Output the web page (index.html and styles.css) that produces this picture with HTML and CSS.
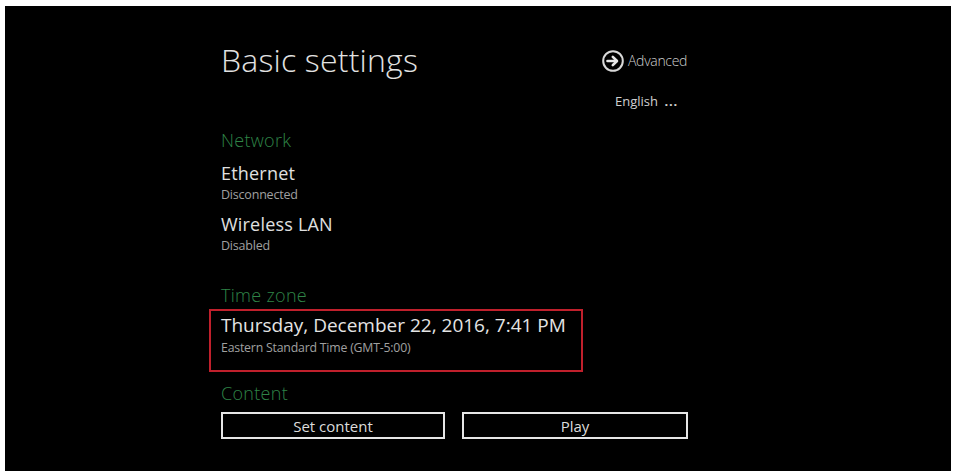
FILE: index.html
```html
<!DOCTYPE html>
<html lang="en">
<head>
<meta charset="utf-8">
<title>Basic settings</title>
<link rel="stylesheet" href="styles.css">
</head>
<body>
<div class="screen">
  <div class="main">
    <header class="header">
      <h1 class="title">Basic settings</h1>
      <div class="side">
        <div class="advanced">
          <svg class="adv-icon" width="22" height="22" viewBox="0 0 22 22">
            <circle cx="11" cy="11" r="9.8" fill="none" stroke="#d8d8d8" stroke-width="2"/>
            <path d="M5.5 11 H14.5" stroke="#e8e8e8" stroke-width="2.6" stroke-linecap="round"/>
            <path d="M10.8 6.8 L15 11 L10.8 15.2" fill="none" stroke="#e8e8e8" stroke-width="2.6" stroke-linecap="round" stroke-linejoin="round"/>
          </svg>
          <span class="adv-text">Advanced</span>
        </div>
        <div class="lang">English <span class="dots">...</span></div>
      </div>
    </header>

    <section class="group network">
      <div class="group-title">Network</div>
      <div class="item">
        <div class="item-name">Ethernet</div>
        <div class="item-sub">Disconnected</div>
      </div>
      <div class="item">
        <div class="item-name">Wireless LAN</div>
        <div class="item-sub">Disabled</div>
      </div>
    </section>

    <section class="group timezone">
      <div class="group-title">Time zone</div>
      <div class="highlight">
        <div class="date">Thursday, December 22, 2016, 7:41 PM</div>
        <div class="item-sub tz">Eastern Standard Time (GMT-5:00)</div>
      </div>
    </section>

    <section class="group content">
      <div class="group-title">Content</div>
      <div class="buttons">
        <button class="btn">Set content</button>
        <button class="btn">Play</button>
      </div>
    </section>
  </div>
</div>
</body>
</html>
```

FILE: styles.css
```css
html, body {
  margin: 0;
  padding: 0;
  background: #ffffff;
}

body {
  font-family: "Open Sans", "Noto Sans", "DejaVu Sans", sans-serif;
  color: #e4e4e4;
}

.screen {
  margin: 6px 2px 0 5px;
  height: 465px;
  background: #000000;
  box-shadow: 0 1px 0 #9a9a9a;
  display: flex;
  padding-left: 216px;
  box-sizing: border-box;
}

.main {
  width: 467px;
  display: flex;
  flex-direction: column;
}

.header {
  display: flex;
  justify-content: space-between;
  align-items: flex-start;
  padding-top: 34px;
}

.title {
  margin: 0;
  font-size: 32px;
  line-height: 40px;
  font-weight: 300;
  color: #e2e2e2;
  letter-spacing: 0.2px;
}

.side {
  width: 86px;
  padding-top: 10px;
  display: flex;
  flex-direction: column;
}

.advanced {
  display: flex;
  align-items: center;
  gap: 4px;
  height: 22px;
}

.adv-icon {
  display: block;
  flex: none;
}

.adv-text {
  font-size: 14px;
  line-height: 16px;
  font-weight: 300;
  color: #cfcfcf;
  letter-spacing: -0.3px;
}

.lang {
  margin-top: 21px;
  padding-left: 13px;
  font-size: 13px;
  line-height: 16px;
  color: #d0d0d0;
}

.dots {
  font-weight: 700;
  letter-spacing: 0.8px;
  margin-left: 3px;
}

.group-title {
  font-size: 18px;
  line-height: 24px;
  font-weight: 300;
  color: #2f8447;
  letter-spacing: 0.3px;
}

.network {
  margin-top: 19px;
}

.item {
  margin-top: 9px;
}

.item + .item {
  margin-top: 10px;
}

.item-name {
  font-size: 18px;
  line-height: 24px;
  color: #e0e0e0;
  letter-spacing: 0.2px;
}

.item-sub {
  margin-top: 3px;
  font-size: 12.5px;
  line-height: 14px;
  color: #a0a0a0;
  letter-spacing: -0.2px;
}

.timezone {
  margin-top: 30px;
}

.highlight {
  margin: 2px 0 0 -12px;
  width: 374px;
  height: 63px;
  box-sizing: border-box;
  border: 2px solid #c0202c;
  padding: 2px 0 0 10px;
}

.date {
  font-size: 19px;
  line-height: 24px;
  color: #e4e4e4;
}

.tz {
  margin-top: 4px;
  font-size: 12.3px;
}

.content {
  margin-top: 9px;
}

.buttons {
  margin-top: 7px;
  display: flex;
  gap: 17px;
}

.btn {
  width: 224px;
  height: 27px;
  box-sizing: border-box;
  background: #000000;
  border: 2px solid #e6e6e6;
  color: #dcdcdc;
  font-family: inherit;
  font-size: 15px;
  line-height: 20px;
  padding: 0;
}

.btn + .btn {
  width: 226px;
}
```
